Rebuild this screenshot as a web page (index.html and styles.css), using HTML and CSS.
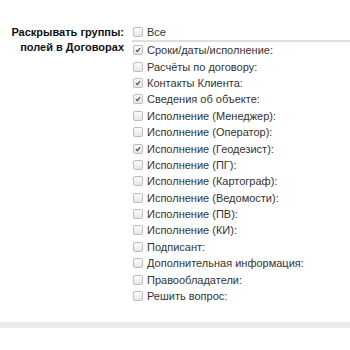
FILE: index.html
```html
<!DOCTYPE html>
<html lang="ru">
<head>
<meta charset="utf-8">
<link rel="stylesheet" href="styles.css">
</head>
<body>
<div class="setting">
  <div class="setting-label">Раскрывать группы:<br>полей в Договорах</div>
  <ul class="options">
    <li class="opt opt-all"><span class="cb"></span>Все</li>
    <li class="opt"><span class="cb on"><svg viewBox="0 0 11 11"><path d="M2.6 5.6 L4.6 7.6 L8.4 2.8"/></svg></span>Сроки/даты/исполнение:</li>
    <li class="opt"><span class="cb"></span>Расчёты по договору:</li>
    <li class="opt"><span class="cb on"><svg viewBox="0 0 11 11"><path d="M2.6 5.6 L4.6 7.6 L8.4 2.8"/></svg></span>Контакты Клиента:</li>
    <li class="opt"><span class="cb on"><svg viewBox="0 0 11 11"><path d="M2.6 5.6 L4.6 7.6 L8.4 2.8"/></svg></span>Сведения об объекте:</li>
    <li class="opt"><span class="cb"></span>Исполнение (Менеджер):</li>
    <li class="opt"><span class="cb"></span>Исполнение (Оператор):</li>
    <li class="opt"><span class="cb on"><svg viewBox="0 0 11 11"><path d="M2.6 5.6 L4.6 7.6 L8.4 2.8"/></svg></span>Исполнение (Геодезист):</li>
    <li class="opt"><span class="cb"></span>Исполнение (ПГ):</li>
    <li class="opt"><span class="cb"></span>Исполнение (Картограф):</li>
    <li class="opt"><span class="cb"></span>Исполнение (Ведомости):</li>
    <li class="opt"><span class="cb"></span>Исполнение (ПВ):</li>
    <li class="opt"><span class="cb"></span>Исполнение (КИ):</li>
    <li class="opt"><span class="cb"></span>Подписант:</li>
    <li class="opt"><span class="cb"></span>Дополнительная информация:</li>
    <li class="opt"><span class="cb"></span>Правообладатели:</li>
    <li class="opt"><span class="cb"></span>Решить вопрос:</li>
  </ul>
</div>
<div class="band"></div>
</body>
</html>
```
FILE: styles.css
```css
html, body {
  margin: 0;
  padding: 0;
  background: #fff;
}
body {
  font-family: "Liberation Sans", Arial, sans-serif;
}
.setting {
  display: grid;
  grid-template-columns: 124px 1fr;
  column-gap: 8px;
  padding-top: 24px;
}
.setting-label {
  text-align: right;
  font-weight: bold;
  font-size: 11px;
  line-height: 15px;
  padding-top: 1px;
  color: #111;
}
.options {
  margin: 0;
  padding: 0;
  list-style: none;
}
.opt {
  display: flex;
  align-items: center;
  gap: 4px;
  height: 16.4px;
  font-size: 11px;
  color: #333;
  white-space: nowrap;
}
.opt-all {
  height: 16px;
  border-bottom: 2px solid #dedede;
}
.cb {
  box-sizing: border-box;
  width: 10px;
  height: 10px;
  margin-left: 1px;
  flex: none;
  border: 1px solid #bdbdbd;
  border-radius: 2px;
  background: linear-gradient(#fcfcfc, #e6e6e6);
  display: flex;
}
.cb svg {
  width: 8px;
  height: 8px;
}
.cb svg path {
  fill: none;
  stroke: #4a4a4a;
  stroke-width: 1.6;
}
.band {
  margin-top: 18px;
  height: 6px;
  background: #ebebeb;
}
```
